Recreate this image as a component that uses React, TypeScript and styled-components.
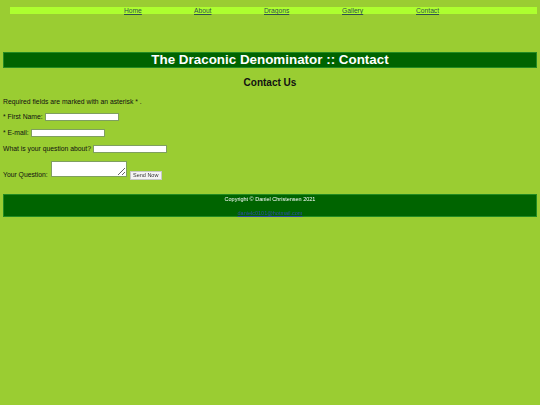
import styled, { createGlobalStyle } from 'styled-components'

const GlobalStyle = createGlobalStyle`
    html, body {
        margin: 0;
        padding: 0;
        background: #9acd32;
    }
    body {
        padding: 0 3px;
        font-family: "Liberation Sans", Arial, sans-serif;
        font-size: 6.8px;
        color: #111;
        min-height: 405px;
    }
`

const NavBar = styled.ul`
    list-style: none;
    margin: 7px 0 0 7px;
    padding: 0 0 0 114px;
    height: 7px;
    background: #adff2f;
    display: flex;
    align-items: center;
    font-size: 6.7px;
`

const NavItem = styled.li<{ width: number }>`
    width: ${ props => props.width }px;
    flex: none;
    line-height: 7px;
`

const NavLink = styled.a`
    color: #2f4f4f;
    text-decoration: underline;
`

const TitleBar = styled.h1`
    margin: 38px 0 0;
    height: 14px;
    line-height: 14px;
    background: #006400;
    border: 1px solid #228b22;
    color: #fff;
    text-align: center;
    font-size: 13.4px;
    font-weight: bold;
`

const SubTitle = styled.h2`
    margin: 9px 0 0;
    text-align: center;
    font-size: 10px;
    line-height: 12px;
    font-weight: bold;
    color: #111;
`

const Form = styled.form`
    margin-top: 9px;
`

const Row = styled.p<{ gap: number }>`
    margin: ${ props => props.gap }px 0 0;
    display: flex;
    align-items: center;
    gap: 2px;
    line-height: 8px;
`

const BottomRow = styled(Row)`
    align-items: flex-end;
`

const BottomLabel = styled.span`
    margin-bottom: -2px;
`

const TextInput = styled.input`
    width: 74px;
    height: 8px;
    padding: 0;
    box-sizing: border-box;
    border: 1px solid #7f9f5f;
    background: #fff;
    font-size: 6px;
`

const QuestionBox = styled.textarea`
    width: 76px;
    height: 16px;
    padding: 0;
    box-sizing: border-box;
    border: 1px solid #7f9f5f;
    background: #fff;
    resize: both;
    margin-left: 1px;
`

const SendButton = styled.button`
    width: 32px;
    height: 9px;
    padding: 0;
    margin: 0 0 -3px 1px;
    box-sizing: border-box;
    border: 1px solid #c8c8c8;
    background: #f4f4f4;
    font-family: "Liberation Sans", Arial, sans-serif;
    font-size: 5.5px;
    color: #333;
    line-height: 7px;
`

const Footer = styled.footer`
    margin-top: 17px;
    height: 20px;
    background: #006400;
    border: 1px solid #228b22;
    text-align: center;
    color: #fff;
    font-size: 5.5px;
    display: flex;
    flex-direction: column;
    align-items: center;
    padding-top: 1px;
`

const FooterLine = styled.div`
    line-height: 7px;
`

const FooterMail = styled.a`
    margin-top: 7px;
    line-height: 7px;
    color: #2b4ca8;
    text-decoration: underline;
`

const links = [
    { label: 'Home', width: 70 },
    { label: 'About', width: 70 },
    { label: 'Dragons', width: 78 },
    { label: 'Gallery', width: 74 },
    { label: 'Contact', width: 70 },
]

export default function App() {
    return (
        <>
            <GlobalStyle />
            <NavBar>
                { links.map( link => (
                    <NavItem key={ link.label } width={ link.width }>
                        <NavLink href="#">{ link.label }</NavLink>
                    </NavItem>
                ) ) }
            </NavBar>
            <TitleBar>The Draconic Denominator :: Contact</TitleBar>
            <SubTitle>Contact Us</SubTitle>
            <Form onSubmit={ e => e.preventDefault() }>
                <Row gap={ 0 }>Required fields are marked with an asterisk * .</Row>
                <Row gap={ 7 }>* First Name: <TextInput type="text" /></Row>
                <Row gap={ 8 }>* E-mail: <TextInput type="text" /></Row>
                <Row gap={ 8 }>What is your question about? <TextInput type="text" /></Row>
                <BottomRow gap={ 8 }>
                    <BottomLabel>Your Question:</BottomLabel>
                    <QuestionBox />
                    <SendButton type="submit">Send Now</SendButton>
                </BottomRow>
            </Form>
            <Footer>
                <FooterLine>Copyright © Daniel Christensen 2021</FooterLine>
                <FooterMail href="#">danielc0101@hotmail.com</FooterMail>
            </Footer>
        </>
    )
}
